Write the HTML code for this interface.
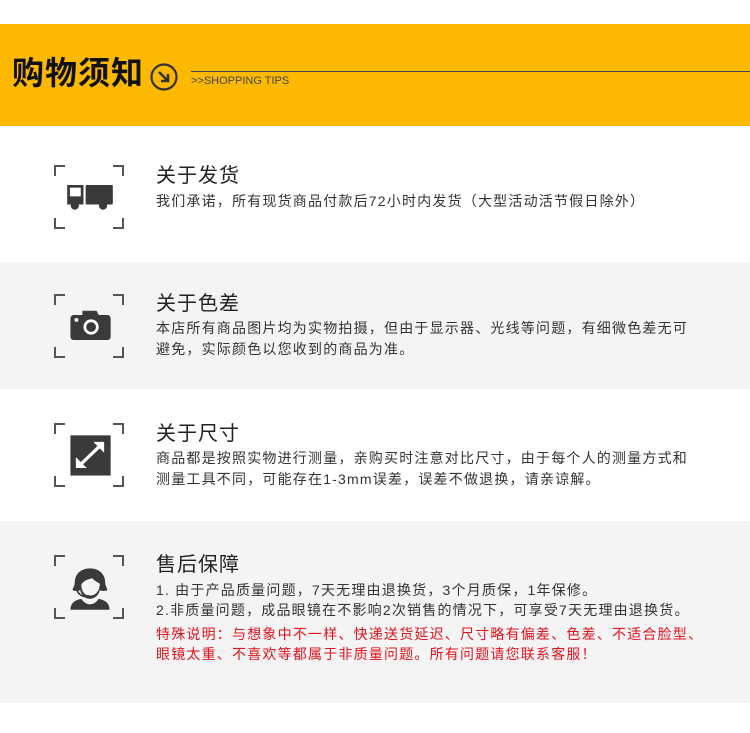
<!DOCTYPE html>
<html><head><meta charset="utf-8"><style>
*{margin:0;padding:0;box-sizing:border-box}
body{width:750px;height:733px;background:#fff;font-family:"Liberation Sans","Noto Sans CJK SC",sans-serif;position:relative;overflow:hidden;color:#333}
.abs{position:absolute}
.hdr{left:0;top:24px;width:750px;height:102px;background:#fdb902}
.sec{left:0;width:750px}
.t{position:absolute;left:156px;font-size:20px;letter-spacing:1px;color:#222;white-space:nowrap;line-height:22px}
.b{position:absolute;left:156px;font-size:14px;letter-spacing:1.2px;color:#333;white-space:nowrap;line-height:20px}
.r{color:#e0141e}
.br{position:absolute;width:70px;height:64px;left:54px}
.br i{position:absolute;width:11px;height:11px;border-color:#555;border-style:solid;border-width:0}
.br .a{left:0;top:0;border-left-width:2px;border-top-width:2px}
.br .c{right:0;top:0;border-right-width:2px;border-top-width:2px}
.br .d{left:0;bottom:0;border-left-width:2px;border-bottom-width:2px}
.br .e{right:0;bottom:0;border-right-width:2px;border-bottom-width:2px}
.br svg{position:absolute;left:11px;top:8px}
</style></head><body>
<div class="abs hdr"></div>
<div class="abs" style="left:12px;top:53px;font-size:32px;font-weight:bold;color:#111;line-height:40px;letter-spacing:1px">购物须知</div>
<svg class="abs" style="left:149px;top:62px" width="30" height="30" viewBox="0 0 30 30"><circle cx="15" cy="15" r="12.5" fill="none" stroke="#333" stroke-width="2.2"/><path d="M10 10 L19 19 M19 12 V19 H12" fill="none" stroke="#333" stroke-width="2.6"/></svg>
<div class="abs" style="left:191px;top:71px;width:559px;height:1px;background:#444"></div>
<div class="abs" style="left:191px;top:74px;font-size:11px;color:#444;line-height:14px">&gt;&gt;SHOPPING TIPS</div>

<div class="abs sec" style="top:262px;height:127px;background:#f4f4f4"></div>
<div class="abs sec" style="top:521px;height:182px;background:#f4f4f4"></div>

<div class="br" style="top:165px"><i class="a"></i><i class="c"></i><i class="d"></i><i class="e"></i>
<svg width="50" height="50" viewBox="0 0 46 46"><path d="M2 11 h15 v18 h-15 z" fill="#3a3a3a"/><path d="M4.5 13.5 h10 v8 h-10z" fill="#fff"/><rect x="19" y="11" width="25" height="18" rx="1" fill="#3a3a3a"/><circle cx="9" cy="30" r="3.8" fill="#3a3a3a"/><circle cx="35" cy="30" r="3.8" fill="#3a3a3a"/></svg></div>
<div class="t" style="top:165px">关于发货</div>
<div class="b" style="top:191px">我们承诺，所有现货商品付款后72小时内发货（大型活动活节假日除外）</div>

<div class="br" style="top:294px"><i class="a"></i><i class="c"></i><i class="d"></i><i class="e"></i>
<svg width="50" height="50" viewBox="0 0 46 46"><path d="M16 8 h13 l2 4 h8 a3 3 0 0 1 3 3 v17 a3 3 0 0 1 -3 3 h-31 a3 3 0 0 1 -3 -3 v-17 a3 3 0 0 1 3 -3 h8z" fill="#3a3a3a"/><circle cx="24" cy="23" r="7" fill="#fff"/><circle cx="24" cy="23" r="4.5" fill="#3a3a3a"/><circle cx="10.5" cy="16.5" r="1.8" fill="#fff"/></svg></div>
<div class="t" style="top:293px">关于色差</div>
<div class="b" style="top:318px">本店所有商品图片均为实物拍摄，但由于显示器、光线等问题，有细微色差无可</div>
<div class="b" style="top:339px">避免，实际颜色以您收到的商品为准。</div>

<div class="br" style="top:423px"><i class="a"></i><i class="c"></i><i class="d"></i><i class="e"></i>
<svg width="50" height="50" viewBox="0 0 46 46"><rect x="5" y="4" width="37" height="37" fill="#3a3a3a"/><path d="M12 33 L35 11" stroke="#fff" stroke-width="3"/><path d="M26 10 H36 V20 Z M10 24 V34 H20 Z" fill="#fff"/></svg></div>
<div class="t" style="top:423px">关于尺寸</div>
<div class="b" style="top:448px">商品都是按照实物进行测量，亲购买时注意对比尺寸，由于每个人的测量方式和</div>
<div class="b" style="top:469px">测量工具不同，可能存在1-3mm误差，误差不做退换，请亲谅解。</div>

<div class="br" style="top:555px"><i class="a"></i><i class="c"></i><i class="d"></i><i class="e"></i>
<svg width="50" height="50" viewBox="0 0 46 46"><path d="M23 5 c-8 0 -14 5 -14 13 c0 3 -2 5 -2 7 c2 1 5 1 7 0 c1 5 5 8 9 8 c4 0 8 -3 9 -8 c2 1 5 1 7 0 c0 -2 -2 -4 -2 -7 c0 -8 -6 -13 -14 -13z" fill="#3a3a3a"/><path d="M15 20 c2 -4 6 -5 10 -6 c2 2 5 4 7 5 c0 7 -4 11 -9 11 c-5 0 -8 -4 -8 -10z" fill="#f4f4f4"/><path d="M11 23 c0 5 4 8 9 8" stroke="#3a3a3a" stroke-width="1.6" fill="none"/><ellipse cx="21" cy="31" rx="2.5" ry="1.6" fill="#3a3a3a"/><path d="M5 43 c0 -6 4 -9 10 -10 c2 3 5 5 8 5 c3 0 6 -2 8 -5 c6 1 10 4 10 10 z" fill="#3a3a3a"/></svg></div>
<div class="t" style="top:554px">售后保障</div>
<div class="b" style="top:580px">1. 由于产品质量问题，7天无理由退换货，3个月质保，1年保修。</div>
<div class="b" style="top:600px">2.非质量问题，成品眼镜在不影响2次销售的情况下，可享受7天无理由退换货。</div>
<div class="b r" style="top:624px">特殊说明：与想象中不一样、快递送货延迟、尺寸略有偏差、色差、不适合脸型、</div>
<div class="b r" style="top:644px">眼镜太重、不喜欢等都属于非质量问题。所有问题请您联系客服！</div>
</body></html>
